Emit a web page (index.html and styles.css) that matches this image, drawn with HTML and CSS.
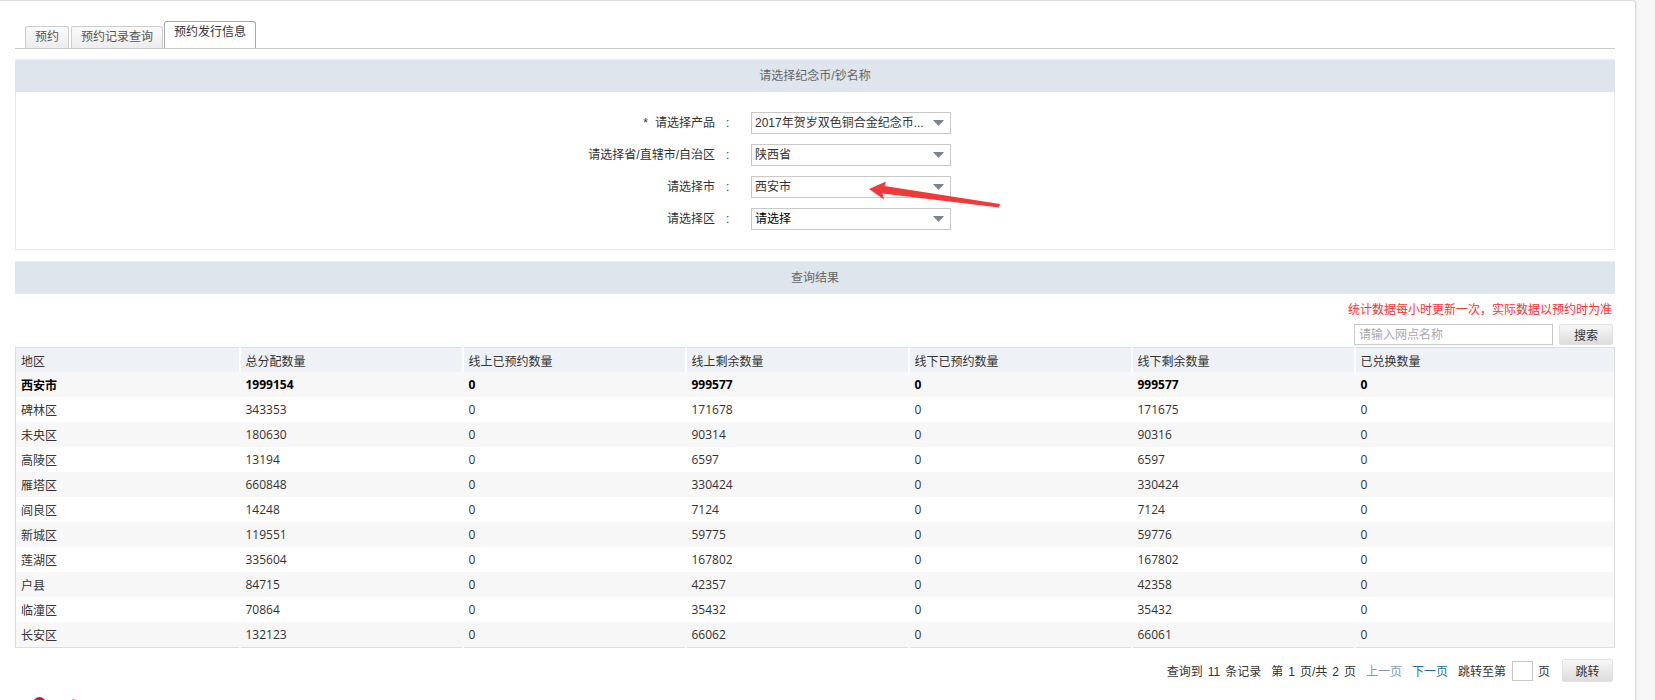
FILE: index.html
```html
<!DOCTYPE html>
<html lang="zh-CN">
<head>
<meta charset="utf-8">
<title>预约发行信息</title>
<link rel="stylesheet" href="styles.css">
</head>
<body>
<div class="panel">
  <div class="tabbar">
    <div class="tab">预约</div>
    <div class="tab">预约记录查询</div>
    <div class="tab active">预约发行信息</div>
  </div>

  <div class="band">请选择纪念币/钞名称</div>
  <div class="formbox">
    <div class="frow">
      <div class="flabel"><span class="req">*</span>请选择产品</div>
      <div class="fcolon">:</div>
      <div class="sel"><span class="seltext">2017年贺岁双色铜合金纪念币...</span><svg class="caret" width="11" height="6" viewBox="0 0 11 6"><path d="M0 0H11L5.5 6Z" fill="#7b8591"/></svg></div>
    </div>
    <div class="frow">
      <div class="flabel">请选择省/直辖市/自治区</div>
      <div class="fcolon">:</div>
      <div class="sel"><span class="seltext">陕西省</span><svg class="caret" width="11" height="6" viewBox="0 0 11 6"><path d="M0 0H11L5.5 6Z" fill="#7b8591"/></svg></div>
    </div>
    <div class="frow">
      <div class="flabel">请选择市</div>
      <div class="fcolon">:</div>
      <div class="sel"><span class="seltext">西安市</span><svg class="caret" width="11" height="6" viewBox="0 0 11 6"><path d="M0 0H11L5.5 6Z" fill="#7b8591"/></svg></div>
    </div>
    <div class="frow">
      <div class="flabel">请选择区</div>
      <div class="fcolon">:</div>
      <div class="sel"><span class="seltext dark">请选择</span><svg class="caret" width="11" height="6" viewBox="0 0 11 6"><path d="M0 0H11L5.5 6Z" fill="#7b8591"/></svg></div>
    </div>
  </div>

  <div class="band band2">查询结果</div>
  <div class="note">统计数据每小时更新一次，实际数据以预约时为准</div>
  <div class="searchrow">
    <input class="sinput" type="text" placeholder="请输入网点名称">
    <button class="btn">搜索</button>
  </div>

  <table class="grid">
    <colgroup>
      <col class="c1"><col class="c"><col class="c"><col class="c"><col class="c"><col class="c"><col class="clast">
    </colgroup>
    <thead>
      <tr><th>地区</th><th>总分配数量</th><th>线上已预约数量</th><th>线上剩余数量</th><th>线下已预约数量</th><th>线下剩余数量</th><th>已兑换数量</th></tr>
    </thead>
    <tbody>
      <tr class="total"><td>西安市</td><td>1999154</td><td>0</td><td>999577</td><td>0</td><td>999577</td><td>0</td></tr>
      <tr><td>碑林区</td><td>343353</td><td>0</td><td>171678</td><td>0</td><td>171675</td><td>0</td></tr>
      <tr><td>未央区</td><td>180630</td><td>0</td><td>90314</td><td>0</td><td>90316</td><td>0</td></tr>
      <tr><td>高陵区</td><td>13194</td><td>0</td><td>6597</td><td>0</td><td>6597</td><td>0</td></tr>
      <tr><td>雁塔区</td><td>660848</td><td>0</td><td>330424</td><td>0</td><td>330424</td><td>0</td></tr>
      <tr><td>阎良区</td><td>14248</td><td>0</td><td>7124</td><td>0</td><td>7124</td><td>0</td></tr>
      <tr><td>新城区</td><td>119551</td><td>0</td><td>59775</td><td>0</td><td>59776</td><td>0</td></tr>
      <tr><td>莲湖区</td><td>335604</td><td>0</td><td>167802</td><td>0</td><td>167802</td><td>0</td></tr>
      <tr><td>户县</td><td>84715</td><td>0</td><td>42357</td><td>0</td><td>42358</td><td>0</td></tr>
      <tr><td>临潼区</td><td>70864</td><td>0</td><td>35432</td><td>0</td><td>35432</td><td>0</td></tr>
      <tr><td>长安区</td><td>132123</td><td>0</td><td>66062</td><td>0</td><td>66061</td><td>0</td></tr>
    </tbody>
  </table>

  <div class="pager">
    <span>查询到<span class="num">11</span>条记录</span>
    <span>第<span class="num">1</span>页/共<span class="num">2</span>页</span>
    <span class="plink off">上一页</span>
    <span class="plink on">下一页</span>
    <span class="jump">跳转至第</span>
    <input class="pinput" type="text">
    <span class="pye">页</span>
    <button class="btn pbtn">跳转</button>
  </div>

  <div class="footer">
    <span class="logo-dot"></span>
    <span class="logo-mark"></span>
  </div>

  <svg class="annot" width="150" height="40" viewBox="0 0 150 40">
    <path d="M9 14 L26 6.5 L24.5 11 L140 29 L139 32.5 L22.5 18.5 L24 24.5 Z" fill="#f03a3a"/>
  </svg>
</div>
</body>
</html>
```

FILE: styles.css
```css
html, body {
  margin: 0;
  padding: 0;
  overflow: hidden;
  height: 700px;
}
body {
  background: #f7f7f7;
  font-family: "Liberation Sans", "Noto Sans CJK SC", sans-serif;
  font-size: 12px;
  color: #333;
}
.panel {
  position: relative;
  width: 1636px;
  box-sizing: border-box;
  background: #fff;
  border-top: 1px solid #dcdcdc;
  border-right: 1px solid #dcdcdc;
  border-top-right-radius: 4px;
  box-shadow: 1px 0 2px rgba(0,0,0,0.06);
  padding: 20px 20px 0 15px;
  height: 760px;
}

/* tabs */
.tabbar {
  display: flex;
  align-items: flex-end;
  gap: 2px;
  padding-left: 10px;
  height: 27px;
  border-bottom: 1px solid #c8c8c8;
}
.tab {
  box-sizing: border-box;
  height: 22px;
  padding: 0 9px;
  line-height: 20px;
  border: 1px solid #cdcdcd;
  border-bottom: none;
  border-radius: 3px 3px 0 0;
  background: linear-gradient(#fbfbfb, #ececec);
  color: #555;
  white-space: nowrap;
}
.tab.active {
  height: 27px;
  background: #fff;
  border-color: #a9a9a9;
  color: #333;
  margin-left: -1px;
}

/* bands */
.band {
  margin-top: 10px;
  height: 33px;
  line-height: 33px;
  background: #dfe5ed;
  border-top: 1px solid #e9edf2;
  box-sizing: border-box;
  text-align: center;
  color: #666;
}
.band2 {
  margin-top: 11px;
}

/* form */
.formbox {
  border: 1px solid #e6e6e6;
  border-top: none;
  padding: 20px 0 19px;
  display: flex;
  flex-direction: column;
  gap: 10px;
}
.frow {
  display: grid;
  grid-template-columns: 699px 36px 200px;
  height: 22px;
  align-items: center;
}
.flabel {
  text-align: right;
  line-height: 22px;
  white-space: nowrap;
}
.req {
  margin-right: 7px;
}
.fcolon {
  padding-left: 11px;
  line-height: 22px;
}
.sel {
  box-sizing: border-box;
  height: 22px;
  border: 1px solid #c9c9c9;
  background: #fff;
  display: flex;
  align-items: center;
  justify-content: space-between;
  padding: 0 6px 0 3px;
}
.seltext {
  line-height: 20px;
  color: #333;
  white-space: nowrap;
}
.seltext.dark {
  color: #000;
}
.caret {
  display: block;
}

/* note & search */
.note {
  margin-top: 6px;
  line-height: 20px;
  text-align: right;
  color: #ff3030;
  padding-right: 3px;
}
.searchrow {
  margin-top: 4px;
  display: flex;
  justify-content: flex-end;
  gap: 6px;
  height: 21px;
  padding-right: 2px;
}
.sinput {
  box-sizing: border-box;
  width: 199px;
  height: 21px;
  border: 1px solid #c9c9c9;
  padding: 0 4px;
  font: inherit;
  font-size: 12px;
  color: #333;
  outline: none;
}
.sinput::placeholder {
  color: #a9a9a9;
}
.btn {
  box-sizing: border-box;
  width: 54px;
  height: 21px;
  border: 1px solid #e0e0e0;
  border-radius: 2px;
  background: linear-gradient(#f7f7f7, #dcdcdc);
  font: inherit;
  font-size: 12px;
  color: #333;
  padding: 0;
}

/* table */
.grid {
  margin-top: 2px;
  width: 1600px;
  table-layout: fixed;
  border-collapse: collapse;
  border: 1px solid #dddddd;
}
.grid col.c1 { width: 224px; }
.grid col.c { width: 223px; }
.grid th {
  height: 24px;
  padding: 0 5px;
  text-align: left;
  font-weight: normal;
  background: #eef1f6;
  color: #333;
  white-space: nowrap;
}
.grid th + th {
  border-left: 2px solid #fff;
}
.grid td {
  height: 25px;
  padding: 0 5px;
  color: #333;
  white-space: nowrap;
  font-family: "Open Sans", "Noto Sans CJK SC", sans-serif;
}
.grid td + td {
  border-left: 2px solid transparent;
}
.grid tbody tr:nth-child(odd) td {
  background: #f7f7f7;
}
.grid tr.total td {
  font-weight: bold;
  color: #000;
}

/* pager */
.pager {
  margin-top: 11px;
  height: 23px;
  display: flex;
  align-items: center;
  justify-content: flex-end;
  gap: 10px;
  padding-right: 2px;
  white-space: nowrap;
}
.pager .num {
  margin: 0 5px;
}
.plink.off { color: #7f98b4; }
.plink.on { color: #1c6fb5; }
.pinput {
  box-sizing: border-box;
  width: 21px;
  height: 20px;
  border: 1px solid #c9c9c9;
  margin-left: -4px;
  padding: 0;
  outline: none;
}
.pye {
  margin-left: -5px;
}
.pbtn {
  width: 51px;
  height: 23px;
  margin-left: 2px;
}

/* footer logo */
.footer {
  margin-top: 15px;
  display: flex;
  align-items: flex-start;
  padding-left: 18px;
  gap: 26px;
}
.logo-dot {
  width: 13px;
  height: 13px;
  border-radius: 50%;
  background: #d3123c;
}
.logo-mark {
  margin-top: 2px;
  width: 3px;
  height: 3px;
  background: #e9a0b0;
}

/* annotation arrow */
.annot {
  position: absolute;
  left: 860px;
  top: 174px;
}
```
